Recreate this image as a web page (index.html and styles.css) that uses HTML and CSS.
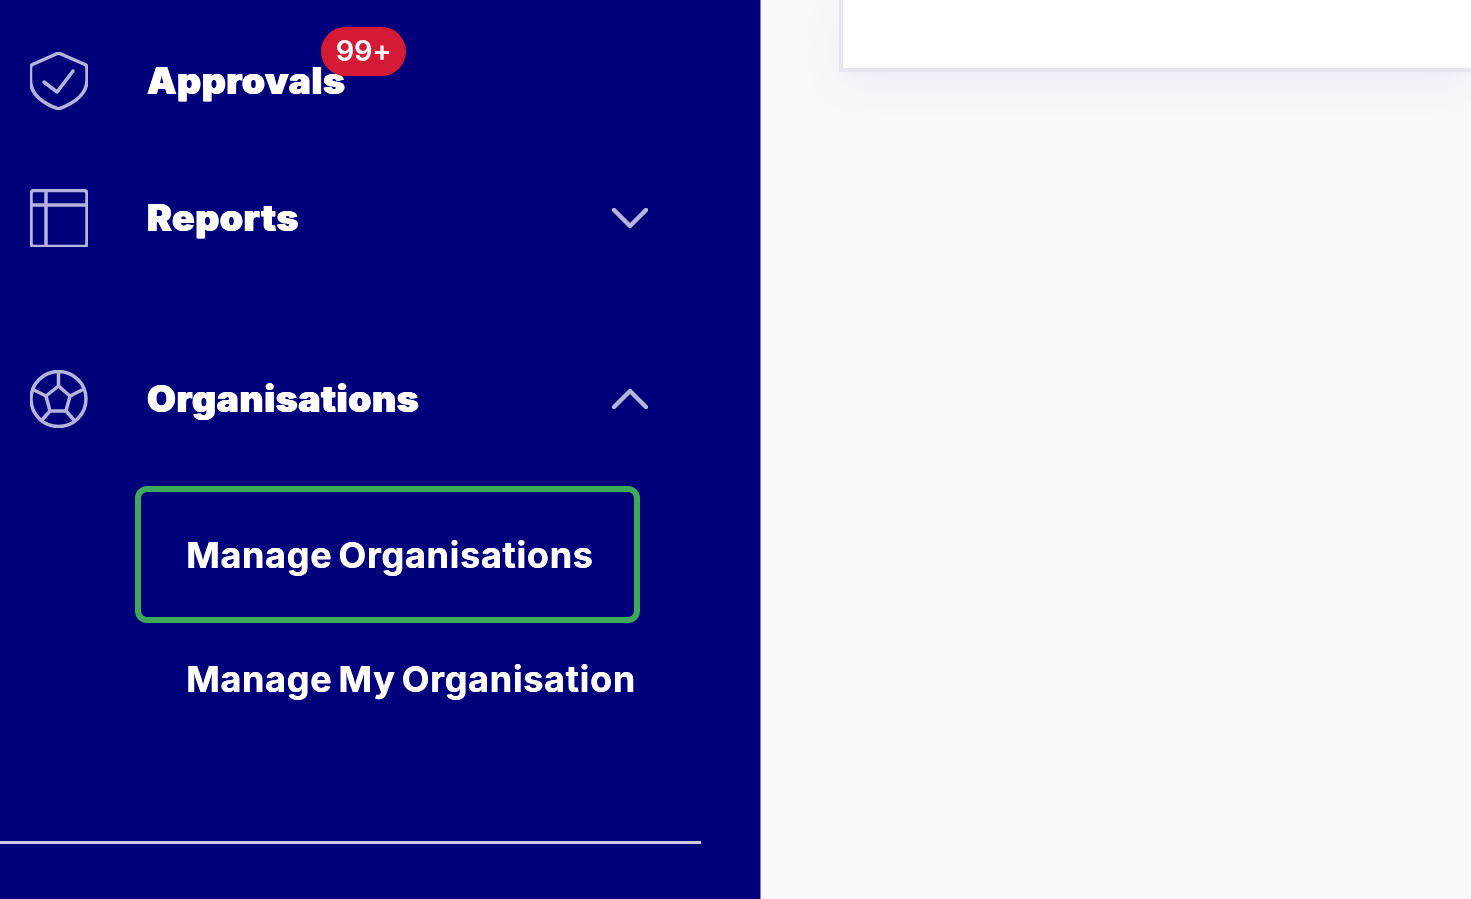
FILE: index.html
```html
<!DOCTYPE html>
<html lang="en">
<head>
    <meta charset="UTF-8">
    <meta name="viewport" content="width=device-width, initial-scale=1.0">
    <title>Manage Organisations</title>
    <link rel="stylesheet" href="styles.css">
</head>
<body>
    <div class="layout">
        <nav class="sidebar">
            <a class="nav-item">
                <svg class="nav-icon" viewBox="0 0 58 58">
                    <path d="M28.500 1 L55 12.500 Q57 13.500 57 16 V28 C57 42 45 51 28.500 57 C12 51 0.500 42 0.500 28 V16 Q0.500 13.500 2.500 12.500 Z"/>
                    <path d="M14 30 L27 40 L43 19"/>
                </svg>
                <span class="nav-label">Approvals<span class="badge">99+</span></span>
            </a>
            <a class="nav-item">
                <svg class="nav-icon" viewBox="0 0 58 58">
                    <rect x="1" y="1.500" width="56" height="56" rx="3"/>
                    <path d="M1 16 H57 M16 1.500 V57.500"/>
                </svg>
                <span class="nav-label">Reports</span>
                <svg class="chevron" viewBox="0 0 36 20"><path d="M2 2 L18 18 L34 2"/></svg>
            </a>
            <a class="nav-item nav-group">
                <svg class="nav-icon" viewBox="0 0 58 58">
                    <circle cx="28.500" cy="29" r="27.500"/>
                    <path d="M28.500 16 L40 26 L36 41 H20 L16 26 Z"/>
                    <path d="M28.500 16 V2 M40 26 L52 20 M36 41 L44 50 M20 41 L12 50 M16 26 L4 20"/>
                </svg>
                <span class="nav-label">Organisations</span>
                <svg class="chevron" viewBox="0 0 36 20"><path d="M2 18 L18 2 L34 18"/></svg>
            </a>
            <div class="sub-nav">
                <a class="sub-item active"><span class="sub-label">Manage Organisations</span></a>
                <a class="sub-item"><span class="sub-label">Manage My Organisation</span></a>
            </div>
            <hr class="divider">
        </nav>
        <main class="content">
            <div class="card"></div>
        </main>
    </div>
</body>
</html>
```

FILE: styles.css
```css
* {
    margin: 0;
    padding: 0;
    box-sizing: border-box;
}

body {
    font-family: Inter, "Open Sans", sans-serif;
    background: #f9f9fc;
    height: 100vh;
    overflow: hidden;
}

.layout {
    display: flex;
    height: 899px;
}

.sidebar {
    position: relative;
    width: 761px;
    flex-shrink: 0;
    background: #00007a;
    border-right: 1px solid #7d7dc4;
    padding-top: 12px;
}

.nav-item {
    display: flex;
    align-items: center;
    height: 137px;
    padding-left: 30px;
    color: #fff;
}

.nav-group {
    margin-top: 44px;
}

.nav-icon {
    width: 58px;
    height: 58px;
    flex-shrink: 0;
    fill: none;
    stroke: #b4b4dc;
    stroke-width: 3.500;
    stroke-linejoin: round;
    stroke-linecap: round;
    filter: blur(0.6px);
}

.nav-label {
    position: relative;
    margin-left: 59px;
    font-size: 37px;
    font-weight: 900;
    letter-spacing: 0.7px;
    line-height: 45px;
    text-shadow: 0.7px 0 #fff, -0.5px 0 #fff;
    filter: blur(0.4px);
}

.badge {
    position: absolute;
    left: 174px;
    top: -31px;
    width: 85px;
    height: 49px;
    border-radius: 25px;
    background: #d51a35;
    color: #fff;
    font-size: 29px;
    font-weight: 600;
    letter-spacing: -0.3px;
    line-height: 48px;
    text-align: center;
    text-shadow: none;
}

.chevron {
    width: 36px;
    height: 20px;
    position: absolute;
    left: 612px;
    fill: none;
    stroke: #b4b4dc;
    stroke-width: 4.500;
    stroke-linecap: round;
    stroke-linejoin: round;
    filter: blur(0.6px);
}

.sub-nav {
    margin-left: 135px;
    margin-top: 19px;
}

.sub-item {
    display: flex;
    align-items: center;
    width: 505px;
    height: 111px;
    padding-left: 51px;
    color: #fff;
    white-space: nowrap;
}

.sub-label {
    font-size: 36px;
    font-weight: 700;
    letter-spacing: 0.7px;
    word-spacing: -3px;
    text-shadow: 0.4px 0 #fff;
    filter: blur(0.5px);
}

.sub-item.active {
    height: 137px;
    border: 6px solid #3fa95a;
    border-radius: 12px;
    padding-left: 45px;
}

.divider {
    width: 701px;
    height: 3px;
    margin-top: 107px;
    border: none;
    background: #c9c9e8;
}

.content {
    flex: 1;
    padding-left: 78px;
}

.card {
    height: 72px;
    background: #fff;
    border-left: 4px solid #e6e6ee;
    border-bottom: 4px solid #e6e6ee;
    box-shadow: 0 10px 40px rgba(60, 60, 160, 0.08);
}
```
